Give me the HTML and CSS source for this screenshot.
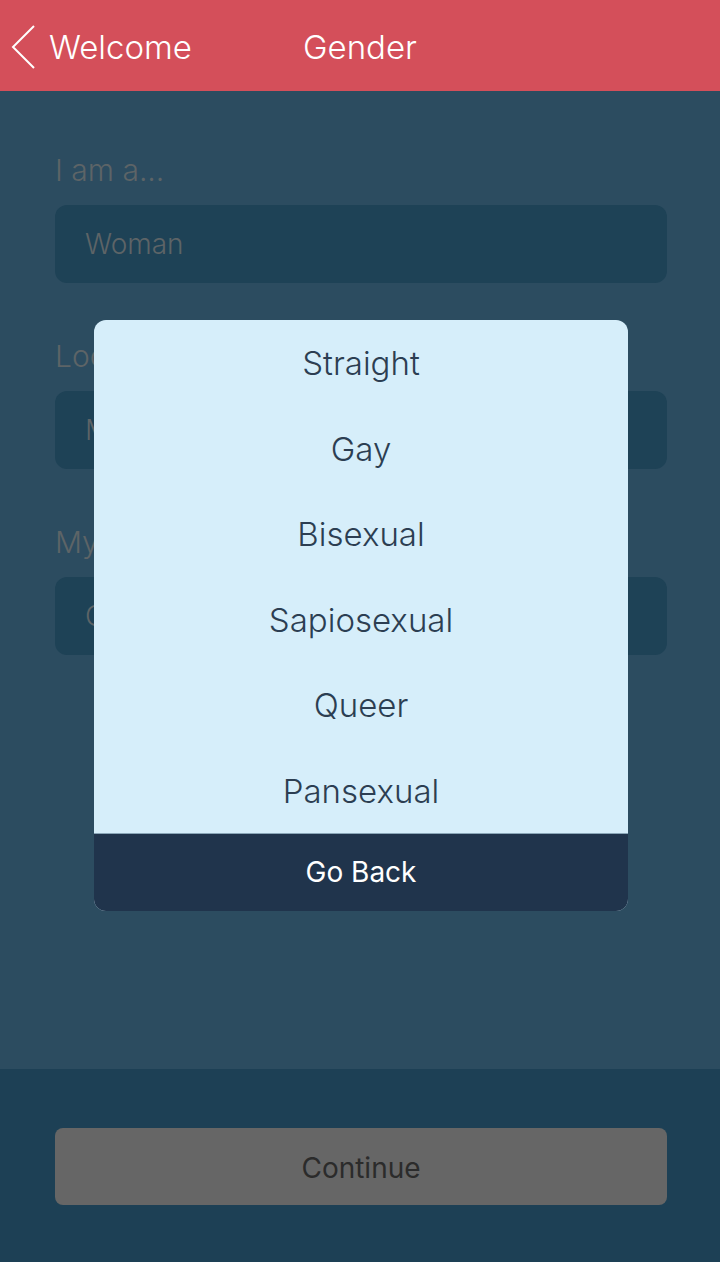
FILE: index.html
```html
<!DOCTYPE html>
<html lang="en">
  <head>
    <meta charset="UTF-8" />
    <title>Gender</title>
    <link rel="stylesheet" href="styles.css">
  </head>
  <body>
    <!-- 顶部导航 -->
    <div class="nav">
      <a class="nav-back" href="javascript:;">
        <svg width="26" height="46" viewBox="0 0 26 46">
          <polyline points="23,2 2,23 23,44" fill="none" stroke="#fff" stroke-width="2" />
        </svg>
        <span>Welcome</span>
      </a>
      <div class="nav-title">Gender</div>
    </div>

    <!-- 表单 -->
    <div class="main">
      <div class="field">
        <div class="field-label">I am a...</div>
        <div class="field-box">Woman</div>
      </div>
      <div class="field">
        <div class="field-label">Looking for</div>
        <div class="field-box">Men</div>
      </div>
      <div class="field">
        <div class="field-label">My orientation</div>
        <div class="field-box">Choose</div>
      </div>
    </div>

    <!-- 底部按钮 -->
    <div class="footer">
      <a class="btn-continue" href="javascript:;">Continue</a>
    </div>

    <!-- 弹出选择框 -->
    <div class="sheet">
      <ul class="sheet-list">
        <li>Straight</li>
        <li>Gay</li>
        <li>Bisexual</li>
        <li>Sapiosexual</li>
        <li>Queer</li>
        <li>Pansexual</li>
      </ul>
      <a class="sheet-back" href="javascript:;">Go Back</a>
    </div>
  </body>
</html>
```

FILE: styles.css
```css
* {
  margin: 0;
  padding: 0;
}

body {
  width: 720px;
  height: 1262px;
  background-color: #2c4c60;
  font-family: Inter, "Noto Sans", sans-serif;
  position: relative;
  overflow: hidden;
  display: flex;
  flex-direction: column;
}

a {
  text-decoration: none;
}

/* 顶部导航 */
.nav {
  height: 91px;
  background-color: #d44f5a;
  display: flex;
  align-items: center;
  position: relative;
  color: #fff;
  padding-top: 3px;
  box-sizing: border-box;
}

.nav-back {
  display: flex;
  align-items: center;
  color: #fff;
  padding-left: 11px;
  font-size: 33px;
  font-weight: 300;
}

.nav-back svg {
  margin-right: 12px;
  margin-top: -1px;
}

.nav-title {
  position: absolute;
  left: 0;
  right: 0;
  text-align: center;
  font-size: 33px;
  font-weight: 300;
  pointer-events: none;
}

/* 表单 */
.main {
  flex: 1;
  padding: 59px 53px 0 55px;
}

.field {
  margin-bottom: 53px;
}

.field-label {
  height: 40px;
  line-height: 40px;
  font-size: 30px;
  font-weight: 300;
  color: #5d6467;
  margin-bottom: 15px;
}

.field-box {
  height: 78px;
  line-height: 78px;
  border-radius: 12px;
  background-color: #1e4256;
  padding-left: 30px;
  font-size: 28px;
  font-weight: 300;
  color: #5d6467;
}

/* 底部 */
.footer {
  height: 193px;
  background-color: #1d4055;
  padding: 59px 53px 0 55px;
  box-sizing: border-box;
}

.btn-continue {
  display: block;
  height: 77px;
  line-height: 80px;
  border-radius: 8px;
  background-color: #666666;
  text-align: center;
  color: #2b2b2b;
  font-size: 28px;
}

/* 弹出选择框 */
.sheet {
  position: absolute;
  left: 94px;
  top: 320px;
  width: 534px;
  border-radius: 12px;
  overflow: hidden;
  background-color: #d6eefa;
}

.sheet-list {
  list-style: none;
}

.sheet-list li {
  height: 85.5px;
  line-height: 86px;
  text-align: center;
  font-size: 33px;
  font-weight: 350;
  color: #2c3e52;
}

.sheet-back {
  display: block;
  height: 77px;
  line-height: 77px;
  background-color: #20344c;
  border-top: 1px solid #8aa6b8;
  text-align: center;
  color: #fff;
  font-size: 28px;
}
```
